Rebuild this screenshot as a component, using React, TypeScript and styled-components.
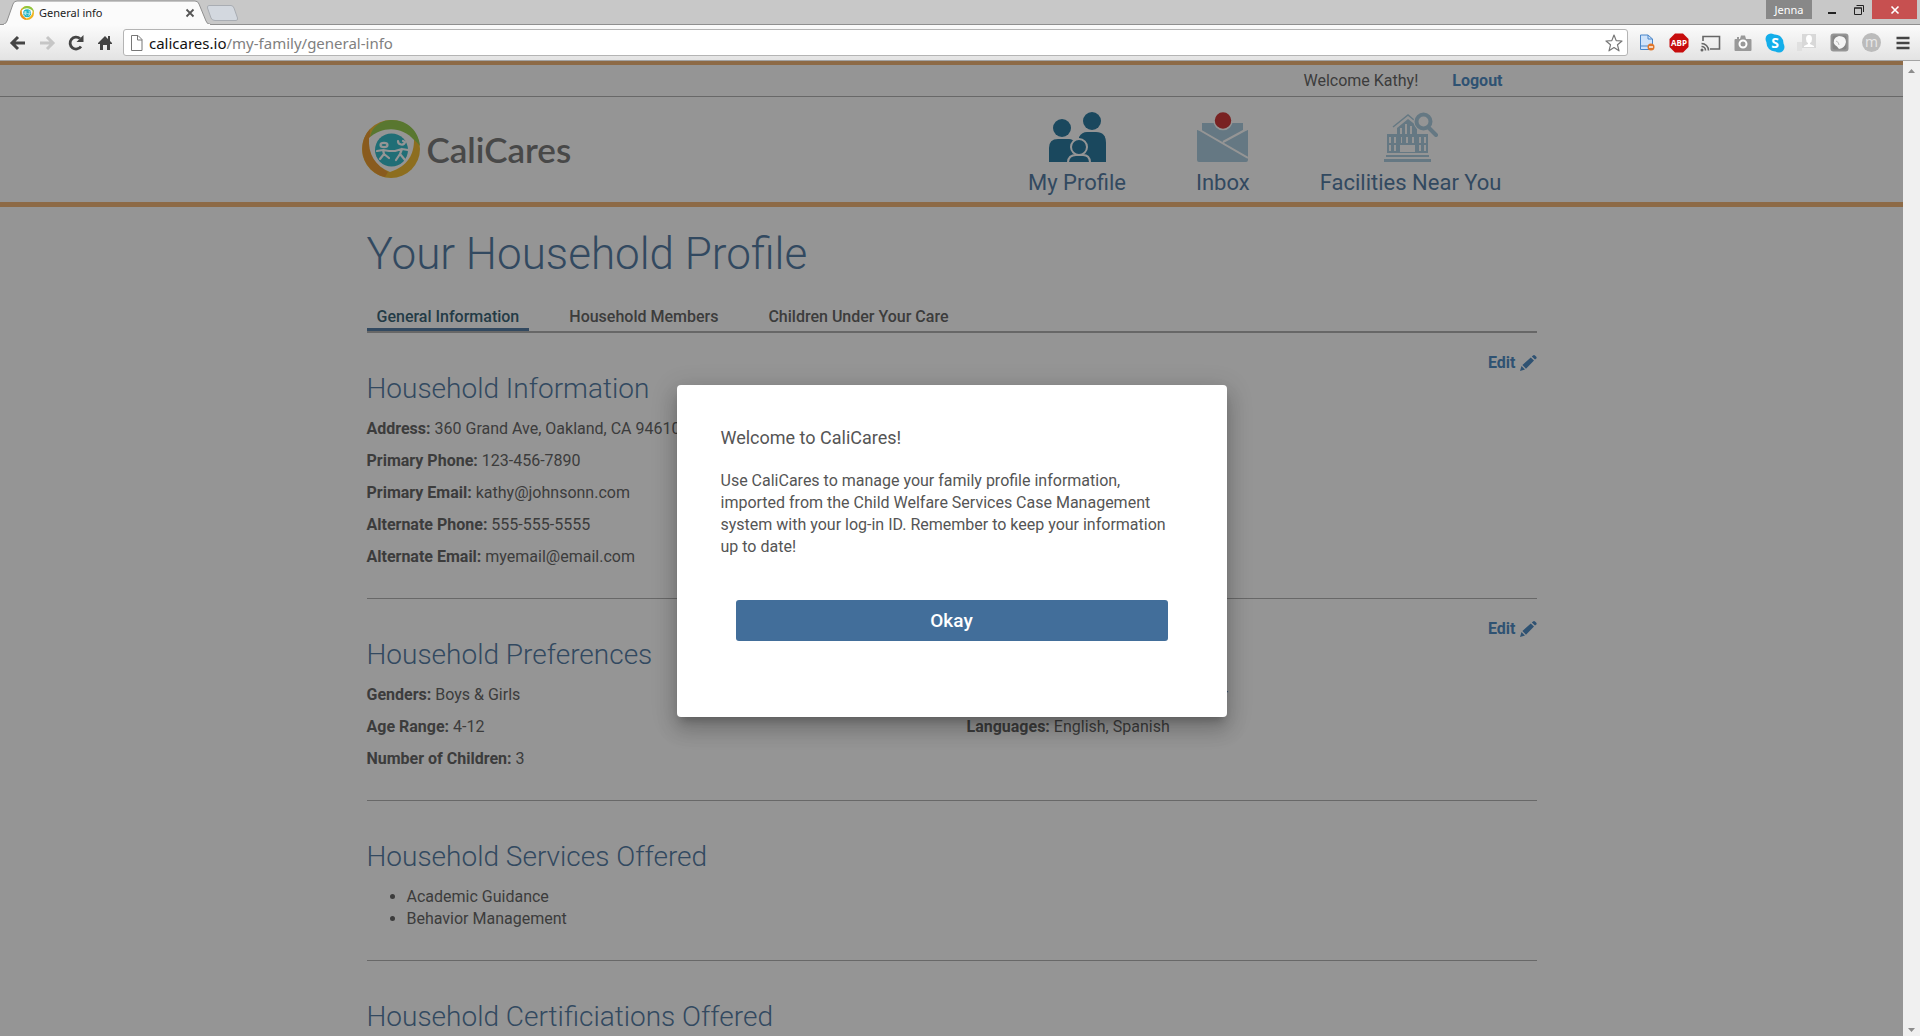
import React from 'react';
import styled, { createGlobalStyle } from 'styled-components';

const ui = '"Noto Sans", "Open Sans", sans-serif';
const blue = '#426e9a';
const linkBlue = '#3c7fbd';
const paleBlue = '#a3c8dc';
const deepBlue = '#146c96';

const GlobalStyle = createGlobalStyle`
  * { box-sizing: border-box; }
  html, body, #root { height: 100%; }
  body {
    margin: 0;
    overflow: hidden;
    font-family: Roboto, "Liberation Sans", sans-serif;
    font-size: 16px;
    line-height: 22px;
    color: #555;
  }
  button { font-family: inherit; cursor: pointer; }
  a { text-decoration: none; }
`;

const Window = styled.div`
  display: flex;
  flex-direction: column;
  height: 100vh;
`;

/* ---------- browser frame ---------- */

const TabStrip = styled.div`
  display: flex;
  align-items: flex-start;
  height: 25px;
  background: #c8c8c8;
  border-bottom: 1px solid #8f8f8f;
  font-family: ${ui};
`;

const BrowserTab = styled.div`
  position: relative;
  display: flex;
  align-items: center;
  gap: 5px;
  width: 214px;
  height: 25px;
  padding: 0 20px;
  font-size: 11px;
  line-height: 24px;
  color: #222;
`;

const TabShape = styled.svg`
  position: absolute;
  inset: 0;
  width: 214px;
  height: 25px;
  z-index: 0;
`;

const TabTitle = styled.span`
  position: relative;
  flex: 1;
`;

const Favicon = styled.svg`
  position: relative;
  flex: none;
`;

const PlainButton = styled.button`
  position: relative;
  display: flex;
  align-items: center;
  justify-content: center;
  padding: 0;
  border: 0;
  background: none;
  svg { overflow: visible; }
`;

const NewTab = styled(PlainButton)`
  width: 32px;
  height: 24px;
  margin-left: -8px;
`;

const WindowButtons = styled.div`
  display: flex;
  margin-left: auto;
  padding-right: 3px;
`;

const User = styled(PlainButton)`
  width: 46px;
  height: 19px;
  margin-right: 6px;
  background: #888;
  color: #fff;
  font-size: 11px;
`;

const WindowButton = styled(PlainButton)<{ $wide?: boolean }>`
  width: ${(p) => (p.$wide ? 45 : 27)}px;
  height: 19px;
  background: ${(p) => (p.$wide ? '#c75050' : 'transparent')};
`;

const Toolbar = styled.div`
  display: flex;
  align-items: center;
  flex: none;
  height: 36px;
  padding: 0 1px 0 3px;
  background: linear-gradient(#fbfbfb, #e3e3e3);
  border-bottom: 1px solid #a3a3a3;
`;

const ToolButton = styled(PlainButton)`
  width: 29px;
  height: 26px;
`;

const AddressBar = styled.div`
  display: flex;
  align-items: center;
  flex: 1;
  height: 27px;
  margin: 0 3px 0 4px;
  padding: 0 4px 0 6px;
  border: 1px solid #b4b4b4;
  border-radius: 3px;
  background: #fff;
`;

const Url = styled.div`
  flex: 1;
  padding-left: 6px;
  font-family: ${ui};
  font-size: 15px;
  line-height: 20px;
  color: #808080;
  b { font-weight: 400; color: #111; }
`;

const Extensions = styled.div`
  display: flex;
`;

const Extension = styled(PlainButton)`
  width: 32px;
  height: 28px;
`;

/* ---------- page ---------- */

const View = styled.div`
  display: flex;
  flex: 1;
  min-height: 0;
`;

const Viewport = styled.div`
  position: relative;
  flex: 1;
  overflow: hidden;
  background: #fff;
`;

const Scrollbar = styled.div`
  display: flex;
  flex-direction: column;
  justify-content: space-between;
  align-items: center;
  flex: none;
  width: 17px;
  padding: 7px 0 3px;
  background: #f0f0f0;
`;

const TopBar = styled.div`
  border-top: 4px solid #f0ad68;
  border-bottom: 1px solid #aaa;
`;

const TopBarInner = styled.div`
  display: flex;
  justify-content: flex-end;
  gap: 34px;
  width: 1170px;
  max-width: 100%;
  margin: 0 auto;
  padding: 5px 34px 4px;
`;

const Logout = styled.a`
  font-weight: 700;
  color: ${linkBlue};
`;

const Header = styled.header`
  border-bottom: 5px solid #f0ad68;
`;

const HeaderInner = styled.div`
  display: flex;
  justify-content: space-between;
  width: 1180px;
  max-width: 100%;
  margin: 0 auto;
  padding: 15px 40px 6px 0;
`;

const Logo = styled.a`
  display: flex;
  align-items: center;
  gap: 7px;
  height: 74px;
  font-family: Lato, "Open Sans", sans-serif;
  font-size: 35px;
  font-weight: 600;
  color: #6c6c6c;
`;

const Nav = styled.nav`
  display: flex;
  gap: 70px;
`;

const NavLink = styled.a`
  display: flex;
  flex-direction: column;
  align-items: center;
  gap: 8px;
  font-size: 22px;
  line-height: 26px;
  color: ${blue};
`;

const Container = styled.main`
  width: 1170px;
  max-width: 100%;
  margin: 0 auto;
`;

const PageTitle = styled.h1`
  margin: 0;
  padding: 22px 0 27px;
  font-size: 44px;
  line-height: 50px;
  font-weight: 300;
  color: ${blue};
`;

const Tabs = styled.div`
  display: flex;
  gap: 30px;
  border-bottom: 2px solid #a8a8a8;
`;

const Tab = styled.button<{ $active?: boolean }>`
  padding: 0 10px;
  border: 0;
  border-bottom: 3px solid ${(p) => (p.$active ? blue : 'transparent')};
  background: none;
  font-size: 16px;
  line-height: 22px;
  font-weight: 500;
  color: ${(p) => (p.$active ? '#265468' : '#555')};
`;

const Section = styled.section`
  position: relative;
  padding: 38px 0 30px;
  border-bottom: 1px solid #aaa;
`;

const SectionTitle = styled.h2`
  margin: 0 0 11px;
  font-size: 28px;
  line-height: 36px;
  font-weight: 300;
  color: ${blue};
`;

const Edit = styled.button`
  position: absolute;
  top: 19px;
  right: 0;
  display: flex;
  align-items: center;
  gap: 4px;
  padding: 0;
  border: 0;
  background: none;
  font-size: 16px;
  line-height: 22px;
  font-weight: 700;
  color: ${linkBlue};
`;

const Columns = styled.div`
  display: grid;
  grid-template-columns: 1fr 1fr;
  gap: 30px;
`;

const Fields = styled.dl`
  display: flex;
  flex-direction: column;
  gap: 10px;
  margin: 0;
`;

const Field = styled.div`
  dt { display: inline; font-weight: 700; }
  dd { display: inline; margin: 0; }
`;

const Bullets = styled.ul`
  margin: 0;
  padding: 0 0 0 40px;
`;

const Backdrop = styled.div`
  position: absolute;
  inset: 0;
  display: flex;
  align-items: center;
  justify-content: center;
  padding-top: 5px;
  background: rgba(33, 33, 33, 0.48);
`;

const Dialog = styled.div`
  width: 550px;
  padding: 41px 44px 76px;
  border-radius: 4px;
  background: #fff;
  box-shadow: 0 7px 8px -4px rgba(0, 0, 0, 0.2), 0 13px 19px 2px rgba(0, 0, 0, 0.14),
    0 5px 24px 4px rgba(0, 0, 0, 0.12);
`;

const DialogTitle = styled.h2`
  margin: 0 0 20px;
  font-size: 18px;
  line-height: 24px;
  font-weight: 400;
`;

const DialogText = styled.p`
  margin: 0 0 42px;
`;

const Okay = styled.button`
  display: block;
  width: 432px;
  max-width: 100%;
  height: 41px;
  margin: 0 auto;
  border: 0;
  border-radius: 3px;
  background: ${blue};
  color: #fff;
  font-size: 19px;
  font-weight: 500;
`;

/* ---------- drawings ---------- */

const LogoMark = ({ size }: { size: number }) => (
  <Favicon width={size} height={size} viewBox="0 0 58 58" aria-hidden="true">
    <circle cx="29" cy="29" r="29" fill="#f0b41e" />
    <path d="M8 9A29 29 0 0 0 23 57L26 52C14 45 7 34 8 9Z" fill="#e8901c" />
    <path d="M8 17C11 4 22 0 30 0C46 0 57 12 58 26C47 11 23 7 8 17Z" fill="#8cc63f" />
    <path d="M7 18C20 6 40 6 52 20C52 34 46 46 28 52C13 46 6 34 7 18Z" fill="#fff" />
    <circle cx="29.500" cy="30" r="16.500" fill="#1fb5c4" />
    <g fill="none" stroke="#fff" strokeWidth="2.200" strokeLinecap="round" strokeLinejoin="round">
      <ellipse cx="22" cy="25" rx="3.500" ry="2.200" />
      <path d="M15 31L21 30L27 31L33 31L40 29L46 30M21 30L22 34L18 39M22 34L27 38M40 29L38 34L34 40M38 34L43 40" />
      <path d="M36 21C36 25 42 26 43 22L41 21" />
    </g>
  </Favicon>
);

const FamilyIcon = () => (
  <svg width="57" height="50" viewBox="0 0 57 50" aria-hidden="true">
    <g fill={deepBlue}>
      <circle cx="13" cy="16" r="9" />
      <circle cx="43" cy="9" r="9" />
      <path d="M0 50V36Q0 27 9 27H20Q24 27 26 31V50Z" />
      <path d="M30 25Q33 20 38 20H47Q57 20 57 31V50H30Z" />
    </g>
    <circle cx="30" cy="35" r="8" fill={deepBlue} stroke="#fff" strokeWidth="2" />
    <path d="M19 51Q19 43 27 43H34Q41 43 41 51Z" fill={deepBlue} stroke="#fff" strokeWidth="2" />
  </svg>
);

const InboxIcon = () => (
  <svg width="51" height="50" viewBox="0 0 51 50" aria-hidden="true">
    <path d="M5 11H46V19L51 18V48Q51 50 49 50H2Q0 50 0 48V18L5 19Z" fill={paleBlue} />
    <path d="M1 17L51 46M26 30L50 17" stroke="#fff" strokeWidth="2" fill="none" />
    <circle cx="26" cy="8.500" r="9" fill="#c92424" stroke="#fff" strokeWidth="1.500" />
  </svg>
);

const FacilityIcon = () => (
  <svg width="54" height="50" viewBox="0 0 54 50" aria-hidden="true">
    <g fill={paleBlue}>
      <path d="M13 16L24 7L33 14V24H13Z" />
      <path d="M3 22H44V41H3Z" />
      <path d="M2 43H45V45H2ZM0 47H47V50H0Z" />
    </g>
    <path d="M9 15L24 3L30 8" stroke={paleBlue} strokeWidth="1.500" fill="none" />
    <g fill="#fff">
      <path d="M16 16H18V22H16ZM21 12H23V22H21ZM26 14H28V22H26Z" />
      <path d="M5 25H7V31H5ZM10 25H12V31H10ZM5 33H7V39H5ZM10 33H12V39H10ZM17 25H18V31H17ZM22 25H24V31H22ZM28 25H30V31H28ZM35 25H37V31H35ZM40 25H42V31H40ZM35 33H37V39H35ZM40 33H42V39H40ZM16 33H31V40H16Z" />
    </g>
    <circle cx="39" cy="9.500" r="9.500" fill="#fff" />
    <circle cx="39.500" cy="9.500" r="7" fill="#fff" stroke={paleBlue} strokeWidth="4" />
    <path d="M45 16L52 23" stroke={paleBlue} strokeWidth="4" strokeLinecap="round" />
  </svg>
);

const Pencil = () => (
  <svg width="17" height="17" viewBox="0 0 17 17" fill={linkBlue} aria-hidden="true">
    <path d="M0 16L1.500 11L5 14.500ZM2.400 10L10.800 2.400L14 5.500L6 13.700ZM11.800 1.500L13 0.500Q14 -0.300 15 0.500L16.300 1.800Q17 2.700 16.300 3.500L15 4.600Z" />
  </svg>
);

const Arrow = ({ down }: { down?: boolean }) => (
  <svg width="7" height="5" viewBox="0 0 7 5" aria-hidden="true">
    <path d={down ? 'M0 0H7L3.500 4Z' : 'M0 5H7L3.500 1Z'} fill="#8c8c8c" />
  </svg>
);

/* ---------- data ---------- */

const household = [
  ['Address:', '360 Grand Ave, Oakland, CA 94610'],
  ['Primary Phone:', '123-456-7890'],
  ['Primary Email:', 'kathy@johnsonn.com'],
  ['Alternate Phone:', '555-555-5555'],
  ['Alternate Email:', 'myemail@email.com'],
];
const preferences = [
  ['Genders:', 'Boys & Girls'],
  ['Age Range:', '4-12'],
  ['Number of Children:', '3'],
];
const background = [
  ['Ethnicity:', 'Caucasian, Hispanic, Other'],
  ['Languages:', 'English, Spanish'],
];

const FieldList = ({ items }: { items: string[][] }) => (
  <Fields>
    {items.map(([name, value]) => (
      <Field key={name}>
        <dt>{name}</dt> <dd>{value}</dd>
      </Field>
    ))}
  </Fields>
);

const EditButton = ({ section }: { section: string }) => (
  <Edit type="button" title={section}>
    Edit
    <Pencil />
  </Edit>
);

const BrowserFrame = () => (
  <>
    <TabStrip>
      <BrowserTab>
        <TabShape viewBox="0 0 214 25" aria-hidden="true">
          <path d="M0 24.500H3Q6 24 7 21L13 4Q14 1 17 1H195Q198 1 199 4L206 21Q207 24.500 211 24.500H214V25H0Z" fill="#fbfbfb" stroke="#8f8f8f" />
          <path d="M4 25H210" stroke="#fbfbfb" strokeWidth="2" />
        </TabShape>
        <LogoMark size={14} />
        <TabTitle>General info</TabTitle>
        <PlainButton type="button" aria-label="Close tab">
          <svg width="8" height="8" viewBox="0 0 8 8">
            <path d="M0.500 0.500L7.500 7.500M7.500 0.500L0.500 7.500" stroke="#555" strokeWidth="1.800" />
          </svg>
        </PlainButton>
      </BrowserTab>
      <NewTab type="button" aria-label="New tab">
        <svg width="32" height="24" viewBox="0 0 32 24">
          <path d="M3 5.500H25Q27 5.500 28 8L31.500 18Q32 20.500 30 20.500H9Q6 20.500 5 18L1.500 8Q1 5.500 3 5.500Z" fill="#d3d8df" stroke="#a9adb3" />
        </svg>
      </NewTab>
      <WindowButtons>
        <User type="button">Jenna</User>
        <WindowButton type="button" aria-label="Minimize">
          <svg width="8" height="12" viewBox="0 0 8 12"><path d="M0 9H8" stroke="#222" strokeWidth="2" /></svg>
        </WindowButton>
        <WindowButton type="button" aria-label="Restore">
          <svg width="10" height="10" viewBox="0 0 10 10" fill="none" stroke="#222">
            <path d="M0.500 3H7.500V9.500H0.500ZM0 3H8M2.500 0.500H9.500V7" />
          </svg>
        </WindowButton>
        <WindowButton type="button" aria-label="Close" $wide>
          <svg width="8" height="8" viewBox="0 0 8 8"><path d="M0.500 0.500L7.500 7.500M7.500 0.500L0.500 7.500" stroke="#fff" strokeWidth="1.600" /></svg>
        </WindowButton>
      </WindowButtons>
    </TabStrip>
    <Toolbar>
      <ToolButton type="button" aria-label="Back">
        <svg width="16" height="14" viewBox="0 0 16 14" fill="none" stroke="#444" strokeWidth="3">
          <path d="M15 7H3M8 1L2 7L8 13" />
        </svg>
      </ToolButton>
      <ToolButton type="button" aria-label="Forward">
        <svg width="16" height="14" viewBox="0 0 16 14" fill="none" stroke="#c6c6c6" strokeWidth="3">
          <path d="M1 7H13M8 1L14 7L8 13" />
        </svg>
      </ToolButton>
      <ToolButton type="button" aria-label="Reload">
        <svg width="16" height="16" viewBox="0 0 16 16">
          <path d="M13 11.500A6 6 0 1 1 12 3.500" fill="none" stroke="#444" strokeWidth="2.800" />
          <path d="M15.500 0V7H8.500Z" fill="#444" />
        </svg>
      </ToolButton>
      <ToolButton type="button" aria-label="Home">
        <svg width="14" height="15" viewBox="0 0 14 15" fill="#444">
          <path d="M0 8L7 1L10 4V1H12V6L14 8V9H12V15H9V10H5V15H2V9H0Z" />
        </svg>
      </ToolButton>
      <AddressBar>
        <svg width="13" height="16" viewBox="0 0 13 16" fill="#fff" stroke="#777" aria-hidden="true">
          <path d="M1.500 0.500H8L12 4.500V15.500H1.500ZM7.500 0.500V5H12" />
        </svg>
        <Url><b>calicares.io</b>/my-family/general-info</Url>
        <PlainButton type="button" aria-label="Bookmark">
          <svg width="18" height="18" viewBox="0 0 18 18" fill="#fff" stroke="#777" strokeWidth="1.200" strokeLinejoin="round">
            <path d="M9 1L11.200 6.600L17 7L12.500 10.800L14 16.800L9 13.500L4 16.800L5.500 10.800L1 7L6.800 6.600Z" />
          </svg>
        </PlainButton>
      </AddressBar>
      <Extensions>
        <Extension type="button" aria-label="Page tool">
          <svg width="16" height="17" viewBox="0 0 16 17">
            <path d="M1.500 1H9L13.500 5V15.500H1.500Z" fill="#cfe3fa" stroke="#4a86c9" />
            <path d="M9 1V5H13.500M1.500 12H9" stroke="#4a86c9" fill="none" />
            <circle cx="12" cy="13" r="3.500" fill="#e0762a" />
            <path d="M10 13H14" stroke="#fff" strokeWidth="1.400" />
          </svg>
        </Extension>
        <Extension type="button" aria-label="Ad blocker">
          <svg width="20" height="20" viewBox="0 0 20 20">
            <path d="M6 0.500H14L19.500 6V14L14 19.500H6L0.500 14V6Z" fill="#c70d0d" />
            <text x="10" y="13" fontSize="8" fontWeight="700" fill="#fff" textAnchor="middle" fontFamily="Open Sans">ABP</text>
          </svg>
        </Extension>
        <Extension type="button" aria-label="Cast">
          <svg width="20" height="16" viewBox="0 0 20 16" fill="none" stroke="#666" strokeWidth="1.600">
            <path d="M2 6V1.500H18.500V14H9M0.500 8.500A7 7 0 0 1 7.500 15.500M0.500 11.500A4 4 0 0 1 4.500 15.500" />
            <circle cx="1" cy="15" r="0.700" />
          </svg>
        </Extension>
        <Extension type="button" aria-label="Screenshot">
          <svg width="18" height="16" viewBox="0 0 18 16">
            <path d="M1.500 4H3V2H5V4H6L7 0.500H11L12 4H16.500Q17.500 4 17.500 5V15Q17.500 16 16.500 16H1.500Q0.500 16 0.500 15V5Q0.500 4 1.500 4Z" fill="#999" />
            <circle cx="9" cy="9" r="3.500" fill="none" stroke="#fff" strokeWidth="2" />
          </svg>
        </Extension>
        <Extension type="button" aria-label="Skype">
          <svg width="20" height="20" viewBox="0 0 20 20">
            <circle cx="10" cy="10" r="8.500" fill="#14aeea" />
            <circle cx="6" cy="6" r="5.500" fill="#14aeea" />
            <circle cx="14" cy="14" r="5.500" fill="#14aeea" />
            <text x="10" y="15" fontSize="14" fontWeight="700" fill="#fff" textAnchor="middle" fontFamily="Open Sans">S</text>
          </svg>
        </Extension>
        <Extension type="button" aria-label="Contacts">
          <svg width="20" height="20" viewBox="0 0 20 20">
            <path d="M0 9H5V18H0Z" fill="#e0e0e0" />
            <path d="M5 1H19V15H5Z" fill="#d8d8d8" />
            <path d="M12 2Q15 2 15 6Q15 9 13 10V11L17 13V14H7V13L11 11V10Q9 9 9 6Q9 2 12 2Z" fill="#fff" />
          </svg>
        </Extension>
        <Extension type="button" aria-label="Evernote">
          <svg width="19" height="19" viewBox="0 0 19 19">
            <rect x="0.500" y="0.500" width="18" height="18" rx="3" fill="#959595" />
            <rect x="2.500" y="2.500" width="14" height="14" rx="2" fill="#858585" />
            <path d="M9 3Q16 3 16 9Q15 15 9 16Q7 13 5 12Q3 10 4 7Q5 4 9 3Z" fill="#f4f4f4" />
            <path d="M6 8Q9 9 9 12" fill="none" stroke="#bbb" />
          </svg>
        </Extension>
        <Extension type="button" aria-label="Mail tool">
          <svg width="19" height="19" viewBox="0 0 19 19">
            <circle cx="9.500" cy="9.500" r="9.500" fill="#bbb" />
            <text x="9.500" y="14" fontSize="14" fill="#e8e8e8" textAnchor="middle" fontFamily="Open Sans">m</text>
          </svg>
        </Extension>
        <Extension type="button" aria-label="Menu">
          <svg width="14" height="14" viewBox="0 0 14 14">
            <path d="M0.500 2H13.500M0.500 7H13.500M0.500 12H13.500" stroke="#444" strokeWidth="2.600" />
          </svg>
        </Extension>
      </Extensions>
    </Toolbar>
  </>
);

export default function App() {
  const [open, setOpen] = React.useState(true);

  return (
    <Window>
      <GlobalStyle />
      <BrowserFrame />
      <View>
        <Viewport>
          <TopBar>
            <TopBarInner>
              <span>Welcome Kathy!</span>
              <Logout href="#logout">Logout</Logout>
            </TopBarInner>
          </TopBar>
          <Header>
            <HeaderInner>
              <Logo href="#home">
                <LogoMark size={58} />
                CaliCares
              </Logo>
              <Nav>
                <NavLink href="#profile"><FamilyIcon />My Profile</NavLink>
                <NavLink href="#inbox"><InboxIcon />Inbox</NavLink>
                <NavLink href="#facilities"><FacilityIcon />Facilities Near You</NavLink>
              </Nav>
            </HeaderInner>
          </Header>
          <Container>
            <PageTitle>Your Household Profile</PageTitle>
            <Tabs>
              <Tab type="button" $active>General Information</Tab>
              <Tab type="button">Household Members</Tab>
              <Tab type="button">Children Under Your Care</Tab>
            </Tabs>
            <Section>
              <EditButton section="Household Information" />
              <SectionTitle>Household Information</SectionTitle>
              <FieldList items={household} />
            </Section>
            <Section>
              <EditButton section="Household Preferences" />
              <SectionTitle>Household Preferences</SectionTitle>
              <Columns>
                <FieldList items={preferences} />
                <FieldList items={background} />
              </Columns>
            </Section>
            <Section>
              <SectionTitle>Household Services Offered</SectionTitle>
              <Bullets>
                <li>Academic Guidance</li>
                <li>Behavior Management</li>
              </Bullets>
            </Section>
            <Section>
              <SectionTitle>Household Certificiations Offered</SectionTitle>
            </Section>
          </Container>
          {open && (
            <Backdrop>
              <Dialog role="dialog" aria-modal="true" aria-labelledby="welcome">
                <DialogTitle id="welcome">Welcome to CaliCares!</DialogTitle>
                <DialogText>
                  Use CaliCares to manage your family profile information, imported from the Child
                  Welfare Services Case Management system with your log-in ID. Remember to keep your
                  information up to date!
                </DialogText>
                <Okay type="button" onClick={() => setOpen(false)}>Okay</Okay>
              </Dialog>
            </Backdrop>
          )}
        </Viewport>
        <Scrollbar>
          <Arrow />
          <Arrow down />
        </Scrollbar>
      </View>
    </Window>
  );
}
